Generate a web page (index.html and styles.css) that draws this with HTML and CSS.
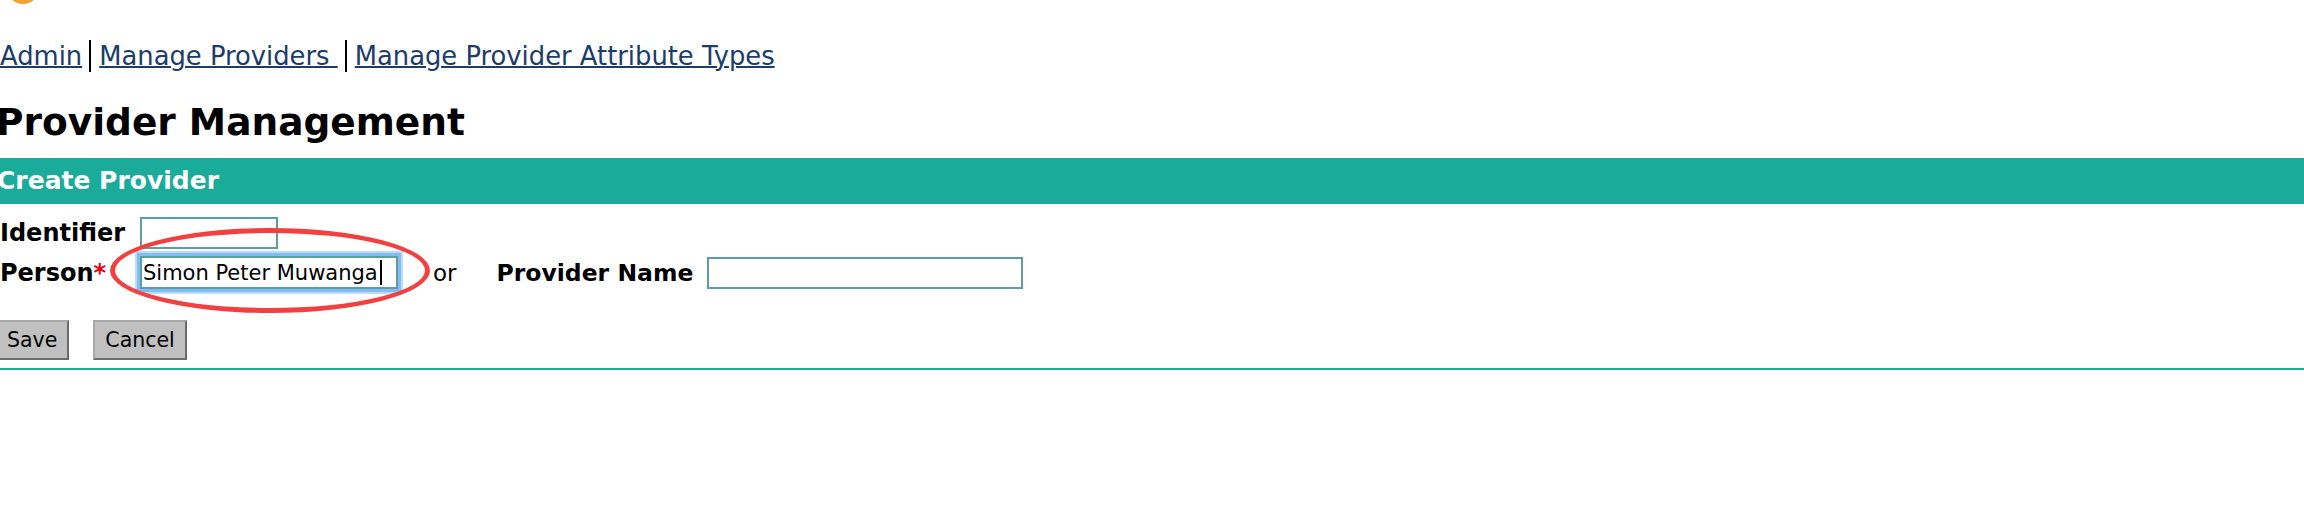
FILE: index.html
```html
<!DOCTYPE html>
<html lang="en">
<head>
<meta charset="utf-8">
<title>Provider Management</title>
<link rel="stylesheet" href="styles.css">
</head>
<body>
<div class="logo"><svg width="60" height="5" viewBox="0 0 60 5"><ellipse cx="23" cy="-14" rx="17" ry="18" fill="#f2a431"/></svg></div>
<ul class="crumbs">
  <li><a href="#">Admin</a></li>
  <li><a href="#">Manage Providers&nbsp;</a></li>
  <li><a href="#">Manage Provider Attribute Types</a></li>
</ul>
<h2 class="title">Provider Management</h2>
<div class="box-header">Create Provider</div>
<form class="box">
  <div class="row">
    <label class="lbl">Identifier</label>
    <input class="txt id" type="text">
  </div>
  <div class="row">
    <label class="lbl">Person<span class="req">*</span></label>
    <div class="txt person focused">Simon Peter Muwanga<span class="caret"></span></div>
    <span class="or">or</span>
    <label class="lbl pn">Provider Name</label>
    <input class="txt name" type="text">
  </div>
  <div class="actions">
    <button type="button" class="btn">Save</button>
    <button type="button" class="btn">Cancel</button>
  </div>
</form>
<div class="annot"></div>
</body>
</html>
```
FILE: styles.css
```css
html, body {
  margin: 0;
  padding: 0;
  background: #fff;
}
body {
  font-family: "DejaVu Sans", Verdana, sans-serif;
  color: #000;
  position: relative;
}
.logo {
  height: 5px;
  overflow: hidden;
}
.logo svg {
  display: block;
}
.crumbs {
  list-style: none;
  margin: 35px 0 0;
  padding: 0;
  display: flex;
  font-size: 25.8px;
  line-height: 32px;
}
.crumbs li {
  padding: 0 7px 0 8px;
}
.crumbs li:first-child {
  padding-left: 0;
}
.crumbs li + li {
  border-left: 2px solid #000;
}
.crumbs a {
  color: #1b3c6c;
  text-decoration: underline;
  text-decoration-thickness: 2px;
}
.title {
  font-size: 37.5px;
  font-weight: bold;
  line-height: 44px;
  margin: 28px 0 14px -4px;
}
.box-header {
  background: #1aab9b;
  color: #fff;
  font-weight: bold;
  font-size: 25px;
  line-height: 46px;
  text-indent: -3px;
}
.box {
  padding: 13px 0 8px;
  border-bottom: 2px solid #1aab9b;
  margin: 0;
}
.row {
  display: flex;
  align-items: center;
}
.row + .row {
  margin-top: 7px;
}
.lbl {
  flex: 0 0 140px;
  font-weight: bold;
  font-size: 24px;
}
.req {
  color: #e60012;
}
.txt {
  box-sizing: border-box;
  border: 2px solid #5f9ea0;
  height: 32px;
  padding: 0 1px;
  margin: 0;
  font-family: "DejaVu Sans", Verdana, sans-serif;
  font-size: 21px;
  background: #fff;
  outline: none;
}
.id {
  width: 138px;
}
.person {
  width: 258px;
  height: 33px;
  display: flex;
  align-items: center;
  white-space: nowrap;
}
.focused {
  box-shadow: 0 0 0 3px #80bcf5, 0 0 0 5px #bcdcfa;
}
.caret {
  display: inline-block;
  width: 2px;
  height: 25px;
  background: #000;
  margin-left: 2px;
}
.or {
  margin-left: 35px;
  font-size: 23px;
}
.pn {
  flex: none;
  margin-left: 40px;
  margin-right: 14px;
  font-size: 23.5px;
}
.name {
  width: 316px;
}
.actions {
  display: flex;
  gap: 24px;
  margin: 31px 0 0 -5px;
}
.btn {
  box-sizing: border-box;
  height: 40px;
  padding: 0 10px;
  font-family: "DejaVu Sans", Verdana, sans-serif;
  font-size: 20.5px;
  color: #000;
  background: #c0c0c0;
  border: 2px solid;
  border-color: #a9a9a9 #6b6b6b #6b6b6b #a9a9a9;
  border-radius: 0;
}
.annot {
  position: absolute;
  left: 110px;
  top: 228px;
  width: 320px;
  height: 85px;
  box-sizing: border-box;
  border: 5px solid #f23f3f;
  border-radius: 50%;
  pointer-events: none;
}
```
